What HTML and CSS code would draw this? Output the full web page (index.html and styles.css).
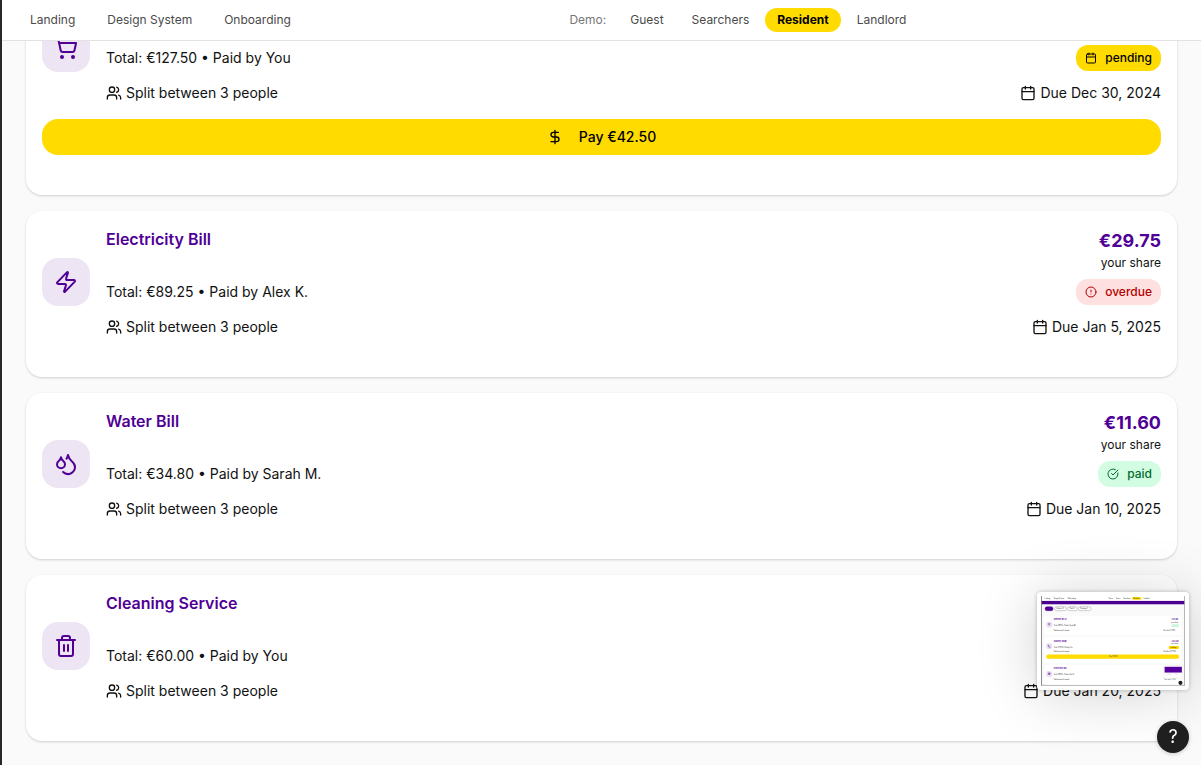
FILE: index.html
```
<!DOCTYPE html>
<html lang="en">
<head>
<meta charset="utf-8">
<meta name="viewport" content="width=device-width, initial-scale=1">
<title>Shared bills</title>
<link rel="stylesheet" href="styles.css">
</head>
<body>
<svg class="sprite" aria-hidden="true">
  <symbol id="users" viewBox="0 0 24 24"><path d="M16 21v-2a4 4 0 0 0-4-4H6a4 4 0 0 0-4 4v2"/><circle cx="9" cy="7" r="4"/><path d="M22 21v-2a4 4 0 0 0-3-3.87M16 3.13a4 4 0 0 1 0 7.75"/></symbol>
  <symbol id="calendar" viewBox="0 0 24 24"><path d="M8 2v4M16 2v4M3 10h18"/><rect x="3" y="4" width="18" height="18" rx="2"/></symbol>
  <symbol id="cart" viewBox="0 0 24 24"><circle cx="8" cy="21" r="1"/><circle cx="19" cy="21" r="1"/><path d="M2.05 2.05h2l2.66 12.42a2 2 0 0 0 2 1.58h9.78a2 2 0 0 0 1.95-1.57l1.65-7.43H5.12"/></symbol>
  <symbol id="zap" viewBox="0 0 24 24"><path d="M4 14a1 1 0 0 1-.78-1.63l9.9-10.2a.5.5 0 0 1 .86.46l-1.92 6.02A1 1 0 0 0 13 10h7a1 1 0 0 1 .78 1.63l-9.9 10.2a.5.5 0 0 1-.86-.46l1.92-6.02A1 1 0 0 0 11 14z"/></symbol>
  <symbol id="droplets" viewBox="0 0 24 24"><path d="M7 16.3c2.2 0 4-1.83 4-4.05 0-1.16-.57-2.26-1.71-3.19S7.29 6.75 7 5.3c-.29 1.45-1.14 2.84-2.29 3.76S3 11.1 3 12.25c0 2.22 1.8 4.05 4 4.05z"/><path d="M12.56 6.6A10.97 10.97 0 0 0 14 3.02c.5 2.5 2 4.9 4 6.5s3 3.5 3 5.5a6.98 6.98 0 0 1-11.91 4.97"/></symbol>
  <symbol id="trash" viewBox="0 0 24 24"><path d="M3 6h18M19 6v14c0 1-1 2-2 2H7c-1 0-2-1-2-2V6M8 6V4c0-1 1-2 2-2h4c1 0 2 1 2 2v2M10 11v6M14 11v6"/></symbol>
  <symbol id="alert" viewBox="0 0 24 24"><circle cx="12" cy="12" r="10"/><path d="M12 8v4M12 16h.01"/></symbol>
  <symbol id="check" viewBox="0 0 24 24"><path d="M21.8 10A10 10 0 1 1 17 3.34"/><path d="m9 11 3 3L22 4"/></symbol>
  <symbol id="dollar" viewBox="0 0 24 24"><path d="M12 2v20M17 5H9.5a3.5 3.5 0 0 0 0 7h5a3.5 3.5 0 0 1 0 7H6"/></symbol>
</svg>

<header class="topbar">
  <nav class="nav nav-pages" aria-label="Pages">
    <a class="nav-link" href="#landing">Landing</a>
    <a class="nav-link" href="#design">Design System</a>
    <a class="nav-link" href="#onboarding">Onboarding</a>
  </nav>
  <nav class="nav" aria-label="Demo">
    <span class="nav-label">Demo:</span>
    <a class="nav-link" href="#guest">Guest</a>
    <a class="nav-link" href="#searchers">Searchers</a>
    <a class="nav-link active" href="#resident" aria-current="page">Resident</a>
    <a class="nav-link" href="#landlord">Landlord</a>
  </nav>
  <div class="nav-end"></div>
</header>

<main class="bills">
  <article class="card">
    <div class="summary">
      <div class="tile"><svg class="icon icon-lg"><use href="#cart"/></svg></div>
      <div class="details">
        <div class="main-row">
          <div class="about"><h2 class="title scrolled">Grocery Shopping</h2><p class="text">Total: €127.50 • Paid by You</p></div>
          <div class="share"><strong class="amount scrolled">€42.50</strong><span class="note scrolled">your share</span><span class="badge pending"><svg class="icon icon-sm"><use href="#calendar"/></svg>pending</span></div>
        </div>
        <div class="meta-row"><span class="meta"><svg class="icon"><use href="#users"/></svg>Split between 3 people</span><span class="meta"><svg class="icon"><use href="#calendar"/></svg>Due Dec 30, 2024</span></div>
      </div>
    </div>
    <button class="pay" type="button"><svg class="icon"><use href="#dollar"/></svg>Pay €42.50</button>
  </article>

  <article class="card">
    <div class="summary">
      <div class="tile"><svg class="icon icon-lg"><use href="#zap"/></svg></div>
      <div class="details">
        <div class="main-row">
          <div class="about"><h2 class="title">Electricity Bill</h2><p class="text">Total: €89.25 • Paid by Alex K.</p></div>
          <div class="share"><strong class="amount">€29.75</strong><span class="note">your share</span><span class="badge overdue"><svg class="icon icon-sm"><use href="#alert"/></svg>overdue</span></div>
        </div>
        <div class="meta-row"><span class="meta"><svg class="icon"><use href="#users"/></svg>Split between 3 people</span><span class="meta"><svg class="icon"><use href="#calendar"/></svg>Due Jan 5, 2025</span></div>
      </div>
    </div>
  </article>

  <article class="card">
    <div class="summary">
      <div class="tile"><svg class="icon icon-lg"><use href="#droplets"/></svg></div>
      <div class="details">
        <div class="main-row">
          <div class="about"><h2 class="title">Water Bill</h2><p class="text">Total: €34.80 • Paid by Sarah M.</p></div>
          <div class="share"><strong class="amount">€11.60</strong><span class="note">your share</span><span class="badge paid"><svg class="icon icon-sm"><use href="#check"/></svg>paid</span></div>
        </div>
        <div class="meta-row"><span class="meta"><svg class="icon"><use href="#users"/></svg>Split between 3 people</span><span class="meta"><svg class="icon"><use href="#calendar"/></svg>Due Jan 10, 2025</span></div>
      </div>
    </div>
  </article>

  <article class="card">
    <div class="summary">
      <div class="tile"><svg class="icon icon-lg"><use href="#trash"/></svg></div>
      <div class="details">
        <div class="main-row">
          <div class="about"><h2 class="title">Cleaning Service</h2><p class="text">Total: €60.00 • Paid by You</p></div>
        </div>
        <div class="meta-row"><span class="meta"><svg class="icon"><use href="#users"/></svg>Split between 3 people</span><span class="meta"><svg class="icon"><use href="#calendar"/></svg>Due Jan 20, 2025</span></div>
      </div>
    </div>
  </article>
</main>

<div class="preview">
  <svg class="preview-art" viewBox="0 0 1200 748" role="img" aria-label="Page preview">
    <rect width="1200" height="748" fill="#fafafa"/>
    <rect width="1200" height="40" fill="#fff"/>
    <rect y="41" width="1200" height="28" fill="#4b0090"/>
    <rect y="0" width="7" height="748" fill="#777"/>
    <rect x="1193" y="0" width="7" height="748" fill="#aaa"/>
    <rect y="740" width="1200" height="8" fill="#aaa"/>
    <rect x="760" y="8" width="76" height="24" rx="12" fill="#ffdb00"/>
    <g fill="#fff" stroke="#999" stroke-width="4">
      <rect x="34" y="90" width="66" height="32" rx="14" fill="#500095" stroke="#500095"/>
      <rect x="114" y="90" width="98" height="32" rx="14"/>
      <rect x="222" y="90" width="80" height="32" rx="14"/>
      <rect x="312" y="90" width="104" height="32" rx="14"/>
    </g>
    <g fill="#fff">
      <rect x="28" y="164" width="1140" height="162" rx="16"/>
      <rect x="28" y="344" width="1140" height="216" rx="16"/>
      <rect x="28" y="576" width="1140" height="164" rx="16"/>
    </g>
    <g fill="#e8def2">
      <rect x="44" y="214" width="48" height="48" rx="14"/><rect x="44" y="394" width="48" height="48" rx="14"/><rect x="44" y="626" width="48" height="48" rx="14"/>
    </g>
    <g fill="none" stroke="#6a27a5" stroke-width="5"><path d="M58 232h20M62 240h12M56 408h5l5 18h12M58 650l10-12v8h10l-10 12v-8z"/></g>
    <rect x="44" y="488" width="1106" height="36" rx="16" fill="#ffdb00"/>
    <rect x="1088" y="236" width="62" height="24" rx="10" fill="#c9f5dc"/>
    <rect x="1064" y="416" width="86" height="26" rx="10" fill="#ffdb00"/>
    <g class="mini">
      <text x="30" y="24">Landing</text><text x="107" y="24">Design System</text><text x="223" y="24">Onboarding</text>
      <text x="565" y="24">Demo:</text><text x="626" y="24">Guest</text><text x="687" y="24">Searchers</text><text x="770" y="24">Resident</text><text x="852" y="24">Landlord</text>
      <text x="130" y="111">Utilities (2)</text><text x="240" y="111">Paid (1)</text><text x="328" y="111">Pending (1)</text>
      <text x="106" y="253">Total: €89.25 • Paid by Sarah M.</text><text x="106" y="288">Split between 3 people</text>
      <text x="106" y="434">Total: €127.50 • Paid by You</text><text x="106" y="469">Split between 3 people</text>
      <text x="106" y="661">Total: €89.25 • Paid by Alex K.</text><text x="106" y="697">Split between 3 people</text>
      <text x="1020" y="288">Due Jan 15, 2025</text><text x="1020" y="469">Due Dec 30, 2024</text><text x="1030" y="700">Due Jan 5, 2025</text>
      <text x="1084" y="225">your share</text><text x="1084" y="404">your share</text>
      <text x="570" y="511">Pay €42.50</text><text x="1080" y="434">pending</text>
    </g>
    <g class="mini mini-title">
      <text x="106" y="202">Internet Wi-Fi</text><text x="106" y="382">Grocery Shop</text><text x="106" y="612">Electricity Bill</text>
      <text x="1088" y="202">€15.00</text><text x="1088" y="382">€42.50</text>
    </g>
    <rect x="1022" y="580" width="156" height="106" rx="6" fill="#fff" stroke="#e4e4e4" stroke-width="4"/>
    <rect x="1030" y="590" width="144" height="48" fill="#55009c"/>
    <g fill="#c9b4dd"><rect x="1050" y="648" width="40" height="4"/><rect x="1110" y="648" width="30" height="4"/></g>
    <circle cx="1162" cy="724" r="17" fill="#1f1f1f"/>
  </svg>
</div>
<button class="help" type="button" aria-label="Help">?</button>
</body>
</html>
```
FILE: styles.css
```
* { box-sizing: border-box; }

body {
  margin: 0;
  min-height: 100vh;
  border-left: 2px solid #28282b;
  background: #fafafa;
  color: #111;
  font-family: Inter, "Liberation Sans", sans-serif;
  font-size: 14px;
  line-height: 20px;
}

h2, p { margin: 0; }

.sprite { position: absolute; width: 0; height: 0; }

.icon {
  flex: none;
  width: 16px;
  height: 16px;
  fill: none;
  stroke: currentColor;
  stroke-width: 2;
  stroke-linecap: round;
  stroke-linejoin: round;
}
.icon-sm { width: 12px; height: 12px; }
.icon-lg { width: 24px; height: 24px; }

.topbar {
  position: sticky;
  top: 0;
  z-index: 1;
  display: flex;
  justify-content: space-between;
  padding: 8px 16px;
  border-bottom: 1px solid #e2e2e2;
  background: #fff;
}
.nav { display: flex; align-items: center; gap: 4px; }
.nav-pages { gap: 8px; }
.nav-link, .nav-label { font-size: 12px; line-height: 16px; }
.nav-link {
  padding: 4px 12px;
  border-radius: 12px;
  color: #4a4a4a;
  text-decoration: none;
}
.nav-label { margin-right: 8px; color: #777; }
.nav-link.active { background: #ffdb00; color: #000; font-weight: 700; }

/* The list starts scrolled partly under the sticky bar. */
.bills {
  display: flex;
  flex-direction: column;
  gap: 16px;
  margin-top: -64px;
  padding: 0 24px 24px;
}
.scrolled { visibility: hidden; }

.card {
  display: flex;
  flex-direction: column;
  gap: 16px;
  padding: 16px 16px 40px;
  border-radius: 16px;
  background: #fff;
  box-shadow: 0 1px 3px rgba(0, 0, 0, 0.1), 0 1px 2px rgba(0, 0, 0, 0.08);
}
.summary { display: flex; align-items: center; gap: 16px; }
.tile {
  display: grid;
  place-items: center;
  flex: none;
  width: 48px;
  height: 48px;
  border-radius: 16px;
  background: #ede5f4;
  color: #500095;
}
.details { display: flex; flex: 1; flex-direction: column; gap: 12px; }
.main-row { display: flex; justify-content: space-between; min-height: 78px; }
.title { margin-bottom: 31px; color: #500095; font-size: 16px; font-weight: 600; line-height: 24px; }
.share { display: flex; flex-direction: column; align-items: flex-end; }
.amount { color: #500095; font-size: 18px; font-weight: 700; line-height: 28px; }
.note { margin-bottom: 8px; font-size: 12px; line-height: 16px; }
.badge {
  display: flex;
  align-items: center;
  gap: 8px;
  padding: 5px 9px;
  border-radius: 12px;
  font-size: 12px;
  font-weight: 500;
  line-height: 16px;
}
.pending { background: #ffdb00; color: #000; }
.overdue { background: #ffe0e0; color: #b00000; }
.paid { background: #d3fde3; color: #006b2d; }
.meta-row { display: flex; justify-content: space-between; }
.meta { display: flex; align-items: center; gap: 4px; }

.pay {
  display: flex;
  align-items: center;
  justify-content: center;
  gap: 16px;
  padding: 8px 16px;
  border: 0;
  border-radius: 16px;
  background: #ffdb00;
  color: #000;
  font: 500 14px/20px Inter, "Liberation Sans", sans-serif;
}

.preview {
  position: fixed;
  right: 12px;
  bottom: 75px;
  z-index: 2;
  width: 152px;
  padding: 4px;
  border-radius: 4px;
  background: #fff;
  box-shadow: 0 0 4px rgba(0, 0, 0, 0.25), 0 4px 60px rgba(0, 0, 0, 0.18);
}
.preview-art { display: block; width: 100%; }
.mini { fill: #333; font-size: 12px; font-weight: 500; }
.mini-title { fill: #500095; font-size: 16px; font-weight: 700; }

.help {
  position: fixed;
  right: 12px;
  bottom: 12px;
  z-index: 2;
  width: 32px;
  height: 32px;
  padding: 0;
  border: 0;
  border-radius: 50%;
  background: #1f1f1f;
  color: #fff;
  font: 400 18px/32px Inter, "Liberation Sans", sans-serif;
  box-shadow: 0 1px 4px rgba(0, 0, 0, 0.2);
}
```
